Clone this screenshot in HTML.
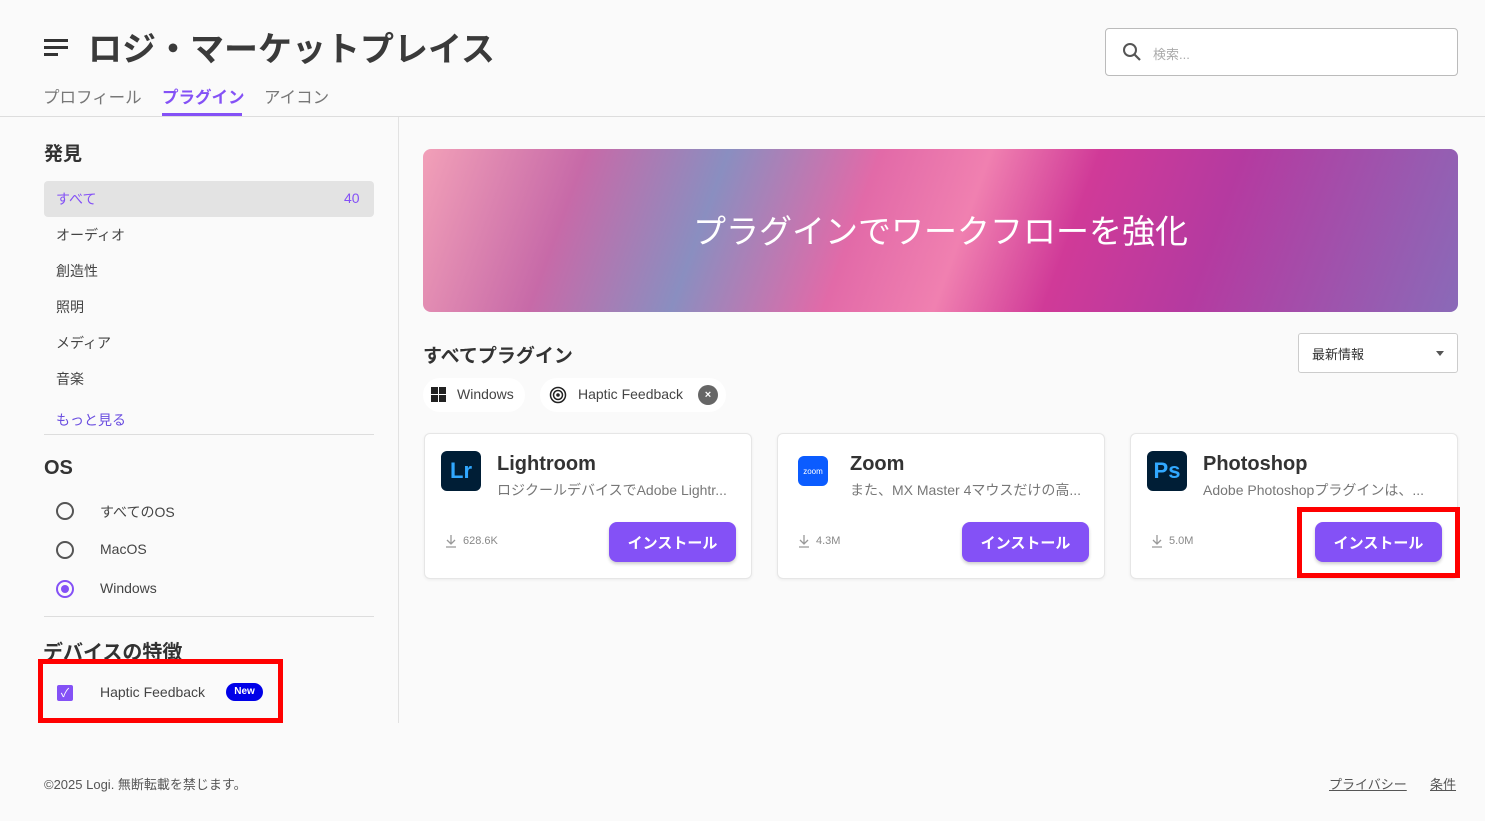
<!DOCTYPE html>
<html><head><meta charset="utf-8"><style>
*{box-sizing:border-box;margin:0;padding:0}
body{width:1485px;height:821px;background:#fafafa;font-family:"Liberation Sans","Noto Sans CJK JP",sans-serif;color:#333;position:relative;overflow:hidden}
.a{position:absolute}
.t{font-size:34px;font-weight:bold;color:#3a3a3a;left:88px;top:22px;letter-spacing:0}
.tab{top:84px;font-size:16.5px;color:#777}
.side{font-size:14px;color:#444;left:56px}
.card{background:#fff;border:1px solid #e6e6e6;border-radius:6px;width:328px;height:146px;top:433px;box-shadow:0 1px 3px rgba(0,0,0,.06)}
.ic{left:16px;top:17px;width:40px;height:40px;border-radius:6px;font-weight:bold;font-size:22px;display:flex;align-items:center;justify-content:center}
.nm{left:72px;top:19px;font-size:20px;font-weight:bold;color:#333}
.ds{left:72px;top:46px;font-size:14px;color:#777;white-space:nowrap}
.dl{left:20px;top:100px;font-size:11px;color:#888;display:flex;align-items:center;gap:6px}
.btn{left:184px;top:88px;width:127px;height:40px;border-radius:8px;background:#8451f6;color:#fff;font-weight:bold;font-size:15px;display:flex;align-items:center;justify-content:center;box-shadow:0 2px 3px rgba(0,0,0,.2)}
.rad{left:56px;width:18px;height:18px;border:2px solid #555;border-radius:50%}
.red{border:5px solid #f00}
</style></head><body>
<div class="a" style="left:44px;top:39px;width:24px;height:3px;background:#333"></div>
<div class="a" style="left:44px;top:46px;width:24px;height:3px;background:#333"></div>
<div class="a" style="left:44px;top:53px;width:14px;height:3px;background:#333"></div>
<div class="a t">ロジ・マーケットプレイス</div>
<div class="a tab" style="left:43px">プロフィール</div>
<div class="a tab" style="left:162px;color:#8451f6;font-weight:bold">プラグイン</div>
<div class="a" style="left:162px;top:113px;width:80px;height:3px;background:#8451f6"></div>
<div class="a tab" style="left:264px">アイコン</div>
<div class="a" style="left:1105px;top:28px;width:353px;height:48px;border:1px solid #bbb;border-radius:4px;background:#fff"></div>
<svg class="a" style="left:1122px;top:42px" width="20" height="20"><circle cx="8" cy="8" r="6" stroke="#555" stroke-width="2" fill="none"/><path d="M12 12l6 6" stroke="#555" stroke-width="2.2"/></svg>
<div class="a" style="left:1153px;top:44px;font-size:13px;color:#aaa">検索...</div>
<div class="a" style="left:0;top:116px;width:1485px;height:1px;background:#ddd"></div>
<div class="a" style="left:398px;top:117px;width:1px;height:606px;background:#e2e2e2"></div>

<div class="a" style="left:44px;top:139px;font-size:19px;font-weight:bold">発見</div>
<div class="a" style="left:44px;top:181px;width:330px;height:36px;background:#e3e3e3;border-radius:4px"></div>
<div class="a side" style="top:189px;color:#8451f6">すべて</div>
<div class="a" style="left:344px;top:190px;font-size:14px;color:#8451f6">40</div>
<div class="a side" style="top:225px">オーディオ</div>
<div class="a side" style="top:261px">創造性</div>
<div class="a side" style="top:297px">照明</div>
<div class="a side" style="top:333px">メディア</div>
<div class="a side" style="top:369px">音楽</div>
<div class="a side" style="top:410px;color:#6a4de0">もっと見る</div>
<div class="a" style="left:44px;top:434px;width:330px;height:1px;background:#ddd"></div>
<div class="a" style="left:44px;top:457px;font-size:20px;font-weight:bold">OS</div>
<div class="a rad" style="top:502px"></div><div class="a side" style="left:100px;top:502px">すべてのOS</div>
<div class="a rad" style="top:541px"></div><div class="a side" style="left:100px;top:541px">MacOS</div>
<div class="a rad" style="top:580px;border-color:#8451f6"></div><div class="a" style="left:61px;top:585px;width:8px;height:8px;border-radius:50%;background:#8451f6"></div><div class="a side" style="left:100px;top:580px">Windows</div>
<div class="a" style="left:44px;top:616px;width:330px;height:1px;background:#ddd"></div>
<div class="a" style="left:43px;top:636px;font-size:20px;font-weight:bold">デバイスの特徴</div>
<div class="a red" style="left:38px;top:659px;width:245px;height:64px"></div>
<div class="a" style="left:57px;top:685px;width:16px;height:16px;background:#8451f6;border-radius:2px;color:#fff;font-size:12px;text-align:center;line-height:16px">✓</div>
<div class="a side" style="left:100px;top:684px">Haptic Feedback</div>
<div class="a" style="left:226px;top:683px;width:37px;height:18px;border-radius:9px;background:#0000e8;color:#fff;font-size:10px;font-weight:bold;text-align:center;line-height:18px">New</div>

<div class="a" style="left:423px;top:149px;width:1035px;height:163px;border-radius:8px;background:linear-gradient(110deg,#f2a0b8 0%,#c76aa8 15%,#8a8ec0 28%,#e26aa8 42%,#f080b0 52%,#d03a98 62%,#b53aa0 75%,#8a6ab8 100%)"></div>
<div class="a" style="left:423px;top:205px;width:1035px;text-align:center;font-size:33px;color:#fff">プラグインでワークフローを強化</div>

<div class="a" style="left:423px;top:341px;font-size:19px;font-weight:bold;color:#333">すべてプラグイン</div>
<div class="a" style="left:1298px;top:333px;width:160px;height:40px;border:1px solid #ccc;border-radius:3px;background:#fff"></div>
<div class="a" style="left:1312px;top:344px;font-size:13px;color:#333">最新情報</div>
<div class="a" style="left:1436px;top:351px;border:4px solid transparent;border-top:5px solid #555"></div>
<div class="a" style="left:423px;top:378px;width:102px;height:34px;border-radius:17px;background:#fff"></div>
<div class="a" style="left:431px;top:387px;width:15px;height:15px;background:linear-gradient(#222,#222) 0 0/7px 7px no-repeat,linear-gradient(#222,#222) 8px 0/7px 7px no-repeat,linear-gradient(#222,#222) 0 8px/7px 7px no-repeat,linear-gradient(#222,#222) 8px 8px/7px 7px no-repeat"></div>
<div class="a" style="left:457px;top:386px;font-size:14px;color:#444">Windows</div>
<div class="a" style="left:540px;top:378px;width:186px;height:34px;border-radius:17px;background:#fff"></div>
<svg class="a" style="left:549px;top:386px" width="18" height="18"><circle cx="9" cy="9" r="7.5" stroke="#222" stroke-width="1.5" fill="none"/><circle cx="9" cy="9" r="4.5" stroke="#222" stroke-width="1.5" fill="none"/><circle cx="9" cy="9" r="1.8" fill="#222"/></svg>
<div class="a" style="left:578px;top:386px;font-size:14px;color:#444">Haptic Feedback</div>
<div class="a" style="left:698px;top:385px;width:20px;height:20px;border-radius:50%;background:#666;color:#fff;font-size:11px;font-weight:bold;text-align:center;line-height:20px">×</div>

<div class="a card" style="left:424px"><div class="a ic" style="background:#001e36;color:#31a8ff">Lr</div><div class="a nm">Lightroom</div><div class="a ds">ロジクールデバイスでAdobe Lightr...</div><div class="a dl"><svg width="12" height="14"><path d="M6 1v9M2 6l4 4 4-4M1 13h10" stroke="#999" stroke-width="1.3" fill="none"/></svg>628.6K</div><div class="a btn">インストール</div></div>
<div class="a card" style="left:777px"><div class="a ic" style="width:30px;height:30px;left:20px;top:22px;background:#0b5cff;color:#fff;font-size:8px;font-weight:normal">zoom</div><div class="a nm">Zoom</div><div class="a ds">また、MX Master 4マウスだけの高...</div><div class="a dl"><svg width="12" height="14"><path d="M6 1v9M2 6l4 4 4-4M1 13h10" stroke="#999" stroke-width="1.3" fill="none"/></svg>4.3M</div><div class="a btn">インストール</div></div>
<div class="a card" style="left:1130px"><div class="a ic" style="background:#001e36;color:#31a8ff">Ps</div><div class="a nm">Photoshop</div><div class="a ds">Adobe Photoshopプラグインは、...</div><div class="a dl"><svg width="12" height="14"><path d="M6 1v9M2 6l4 4 4-4M1 13h10" stroke="#999" stroke-width="1.3" fill="none"/></svg>5.0M</div><div class="a btn">インストール</div></div>
<div class="a red" style="left:1297px;top:507px;width:163px;height:71px"></div>

<div class="a" style="left:44px;top:774px;font-size:13px;color:#555">©2025 Logi. 無断転載を禁じます。</div>
<div class="a" style="left:1329px;top:774px;font-size:13px;color:#555;text-decoration:underline">プライバシー</div>
<div class="a" style="left:1430px;top:774px;font-size:13px;color:#555;text-decoration:underline">条件</div>
</body></html>
